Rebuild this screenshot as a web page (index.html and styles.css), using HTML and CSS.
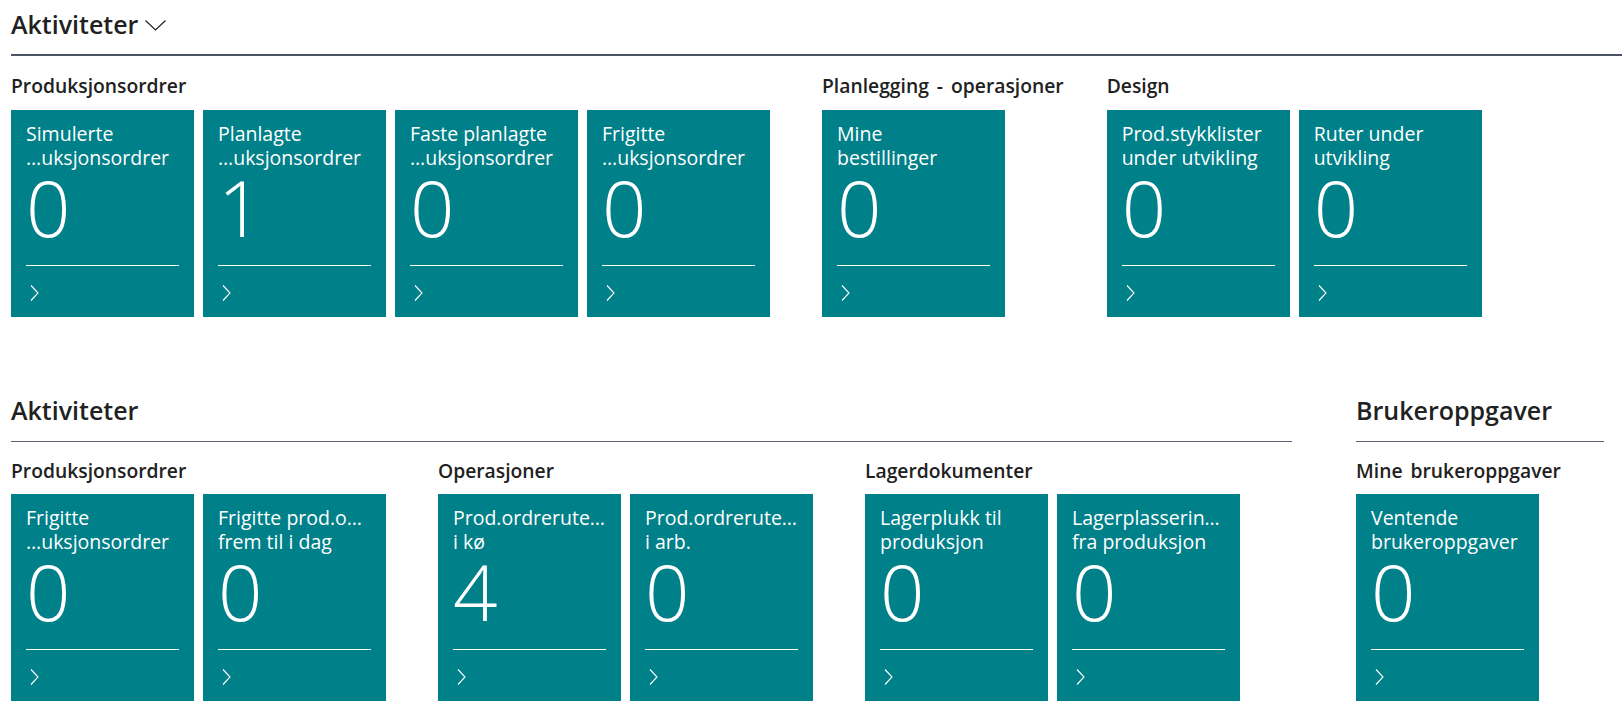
FILE: index.html
```html
<!DOCTYPE html>
<html>
<head>
	<meta charset="UTF-8">
	<link rel="stylesheet" href="styles.css">
</head>
<body>
<div class="page">
	<section class="area area-top">
		<h2 class="area-title">Aktiviteter
			<svg class="caret" width="21" height="11" viewBox="0 0 21 11"><polyline points="0.5,0.5 10.5,10 20.5,0.5" fill="none" stroke="#212121" stroke-width="1.2"/></svg>
		</h2>
		<div class="groups">
			<div class="group">
				<h3 class="group-title">Produksjonsordrer</h3>
				<div class="tiles">
					<a class="tile"><span class="tile-caption">Simulerte<br>…uksjonsordrer</span><span class="tile-value">0</span><span class="tile-rule"></span><span class="tile-go"><svg width="9" height="16" viewBox="0 0 9 16"><polyline points="1,0.5 8,8 1,15.5" fill="none" stroke="#fff" stroke-width="1.1"/></svg></span></a>
					<a class="tile"><span class="tile-caption">Planlagte<br>…uksjonsordrer</span><span class="tile-value">1</span><span class="tile-rule"></span><span class="tile-go"><svg width="9" height="16" viewBox="0 0 9 16"><polyline points="1,0.5 8,8 1,15.5" fill="none" stroke="#fff" stroke-width="1.1"/></svg></span></a>
					<a class="tile"><span class="tile-caption">Faste planlagte<br>…uksjonsordrer</span><span class="tile-value">0</span><span class="tile-rule"></span><span class="tile-go"><svg width="9" height="16" viewBox="0 0 9 16"><polyline points="1,0.5 8,8 1,15.5" fill="none" stroke="#fff" stroke-width="1.1"/></svg></span></a>
					<a class="tile"><span class="tile-caption">Frigitte<br>…uksjonsordrer</span><span class="tile-value">0</span><span class="tile-rule"></span><span class="tile-go"><svg width="9" height="16" viewBox="0 0 9 16"><polyline points="1,0.5 8,8 1,15.5" fill="none" stroke="#fff" stroke-width="1.1"/></svg></span></a>
				</div>
			</div>
			<div class="group">
				<h3 class="group-title">Planlegging - operasjoner</h3>
				<div class="tiles">
					<a class="tile"><span class="tile-caption">Mine<br>bestillinger</span><span class="tile-value">0</span><span class="tile-rule"></span><span class="tile-go"><svg width="9" height="16" viewBox="0 0 9 16"><polyline points="1,0.5 8,8 1,15.5" fill="none" stroke="#fff" stroke-width="1.1"/></svg></span></a>
				</div>
			</div>
			<div class="group">
				<h3 class="group-title">Design</h3>
				<div class="tiles">
					<a class="tile"><span class="tile-caption">Prod.stykklister<br>under utvikling</span><span class="tile-value">0</span><span class="tile-rule"></span><span class="tile-go"><svg width="9" height="16" viewBox="0 0 9 16"><polyline points="1,0.5 8,8 1,15.5" fill="none" stroke="#fff" stroke-width="1.1"/></svg></span></a>
					<a class="tile"><span class="tile-caption">Ruter under<br>utvikling</span><span class="tile-value">0</span><span class="tile-rule"></span><span class="tile-go"><svg width="9" height="16" viewBox="0 0 9 16"><polyline points="1,0.5 8,8 1,15.5" fill="none" stroke="#fff" stroke-width="1.1"/></svg></span></a>
				</div>
			</div>
		</div>
	</section>

	<div class="row">
		<section class="area">
			<h2 class="area-title thin">Aktiviteter</h2>
			<div class="groups">
				<div class="group">
					<h3 class="group-title">Produksjonsordrer</h3>
					<div class="tiles">
						<a class="tile"><span class="tile-caption">Frigitte<br>…uksjonsordrer</span><span class="tile-value">0</span><span class="tile-rule"></span><span class="tile-go"><svg width="9" height="16" viewBox="0 0 9 16"><polyline points="1,0.5 8,8 1,15.5" fill="none" stroke="#fff" stroke-width="1.1"/></svg></span></a>
						<a class="tile"><span class="tile-caption">Frigitte prod.o…<br>frem til i dag</span><span class="tile-value">0</span><span class="tile-rule"></span><span class="tile-go"><svg width="9" height="16" viewBox="0 0 9 16"><polyline points="1,0.5 8,8 1,15.5" fill="none" stroke="#fff" stroke-width="1.1"/></svg></span></a>
					</div>
				</div>
				<div class="group">
					<h3 class="group-title">Operasjoner</h3>
					<div class="tiles">
						<a class="tile"><span class="tile-caption">Prod.ordrerute…<br>i kø</span><span class="tile-value">4</span><span class="tile-rule"></span><span class="tile-go"><svg width="9" height="16" viewBox="0 0 9 16"><polyline points="1,0.5 8,8 1,15.5" fill="none" stroke="#fff" stroke-width="1.1"/></svg></span></a>
						<a class="tile"><span class="tile-caption">Prod.ordrerute…<br>i arb.</span><span class="tile-value">0</span><span class="tile-rule"></span><span class="tile-go"><svg width="9" height="16" viewBox="0 0 9 16"><polyline points="1,0.5 8,8 1,15.5" fill="none" stroke="#fff" stroke-width="1.1"/></svg></span></a>
					</div>
				</div>
				<div class="group">
					<h3 class="group-title">Lagerdokumenter</h3>
					<div class="tiles">
						<a class="tile"><span class="tile-caption">Lagerplukk til<br>produksjon</span><span class="tile-value">0</span><span class="tile-rule"></span><span class="tile-go"><svg width="9" height="16" viewBox="0 0 9 16"><polyline points="1,0.5 8,8 1,15.5" fill="none" stroke="#fff" stroke-width="1.1"/></svg></span></a>
						<a class="tile"><span class="tile-caption">Lagerplasserin…<br>fra produksjon</span><span class="tile-value">0</span><span class="tile-rule"></span><span class="tile-go"><svg width="9" height="16" viewBox="0 0 9 16"><polyline points="1,0.5 8,8 1,15.5" fill="none" stroke="#fff" stroke-width="1.1"/></svg></span></a>
					</div>
				</div>
			</div>
		</section>
		<section class="area">
			<h2 class="area-title thin">Brukeroppgaver</h2>
			<div class="groups">
				<div class="group">
					<h3 class="group-title">Mine brukeroppgaver</h3>
					<div class="tiles">
						<a class="tile"><span class="tile-caption">Ventende<br>brukeroppgaver</span><span class="tile-value">0</span><span class="tile-rule"></span><span class="tile-go"><svg width="9" height="16" viewBox="0 0 9 16"><polyline points="1,0.5 8,8 1,15.5" fill="none" stroke="#fff" stroke-width="1.1"/></svg></span></a>
					</div>
				</div>
			</div>
		</section>
	</div>
</div>
</body>
</html>
```

FILE: styles.css
```css
body{margin:0;background:#fff;color:#212121;font-family:"Open Sans","Noto Sans",sans-serif;}
.page{padding:6px 0 0 11px;}
.area-top{margin-bottom:75px;}
.area-title{margin:0;display:flex;align-items:center;gap:7px;font-size:25px;font-weight:600;line-height:36px;padding-bottom:12px;border-bottom:2px solid #4b5665;}
.area-title.thin{padding-bottom:13px;border-bottom:1px solid #5b6470;}
.caret{margin-top:3px;}
.row{display:flex;gap:64px;}
.groups{display:flex;}
.group{margin-right:43px;}
.group-title{margin:17px 0 11px;font-size:19.3px;font-weight:600;line-height:26px;word-spacing:3px;white-space:nowrap;}
.thin + .groups .group-title{margin:16px 0 10px;}
.tiles{display:flex;}
.tile{width:183px;height:207px;margin-right:9px;padding:12px 15px 0;box-sizing:border-box;display:flex;flex-direction:column;background:#008089;color:#fff;text-decoration:none;}
.tile-caption{height:48px;font-size:19.5px;line-height:24px;white-space:nowrap;}
.tile-value{margin-top:5px;font-size:78px;font-weight:300;line-height:64px;}
.tile-rule{height:1px;margin-top:26px;background:#fff;}
.tile-go{height:16px;margin:18px 0 0 4px;}
```
